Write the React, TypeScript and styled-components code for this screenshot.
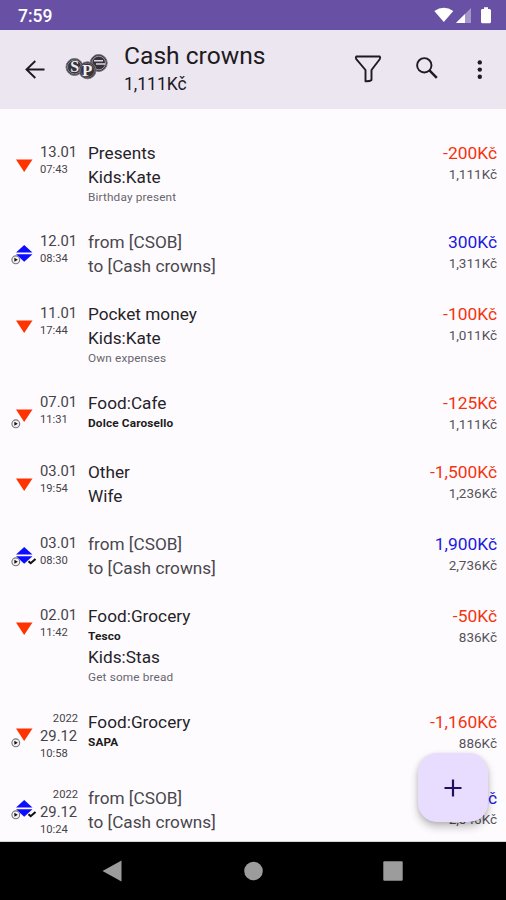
import React from 'react';
import styled, { createGlobalStyle } from 'styled-components';

const GlobalStyle = createGlobalStyle`
  * { box-sizing: border-box; }
  body { margin: 0; background: #fefbff; font-family: Roboto, "Noto Sans", sans-serif; }
`;

const Screen = styled.div`
  position: relative;
  width: 506px;
  height: 900px;
  display: flex;
  flex-direction: column;
  overflow: hidden;
  background: #fefbff;
`;

const StatusBar = styled.div`
  flex: none;
  height: 30px;
  padding: 2px 14px 0 18px;
  display: flex;
  align-items: center;
  justify-content: space-between;
  background: #6850a5;
  color: #fff;
  font-size: 17.5px;
  font-weight: 500;
`;

const StatusIconSlot = styled.div`
  display: flex;
  padding-bottom: 2px;
`;

const AppBar = styled.header`
  flex: none;
  height: 79px;
  padding: 0 15px 0 23px;
  display: flex;
  align-items: center;
  background: #ece6f1;
  color: #1d1b20;
`;

const BackSlot = styled.div`
  width: 42px;
  display: flex;
`;

const LogoSlot = styled.div`
  width: 59px;
  padding-bottom: 5px;
  display: flex;
`;

const Heading = styled.div`
  flex: 1;
  height: 79px;
  padding-top: 11px;
`;

const Title = styled.h1`
  margin: 0;
  font-size: 24.6px;
  line-height: 29px;
  font-weight: 400;
`;

const Subtitle = styled.div`
  font-size: 17.5px;
  line-height: 28px;
`;

const Actions = styled.div`
  display: flex;
  align-items: center;
`;

const FilterSlot = styled.div`
  width: 61px;
  padding-bottom: 2px;
  display: flex;
`;

const SearchSlot = styled.div`
  width: 54px;
  padding-bottom: 3px;
  display: flex;
`;

const List = styled.main`
  flex: none;
  height: 733px;
  padding-top: 20px;
  overflow: hidden;
  border-bottom: 1px solid #d5d3d6;
`;

const Row = styled.div<{ $height: number }>`
  height: ${p => p.$height}px;
  padding: 12px 9px 0 11px;
  display: grid;
  grid-template-columns: 29px 48px 1fr auto;
`;

const Marker = styled.div<{ $drop: number }>`
  padding-top: ${p => p.$drop}px;
  display: flex;
  align-items: flex-start;
`;

const When = styled.div<{ $lift: number }>`
  width: 38px;
  margin-top: ${p => p.$lift}px;
  display: flex;
  flex-direction: column;
  color: #454348;
`;

const Year = styled.span`
  height: 18px;
  font-size: 11.2px;
  line-height: 20px;
  text-align: right;
`;

const Day = styled.span`
  height: 18px;
  font-size: 14.8px;
  line-height: 18px;
`;

const Time = styled.span`
  height: 17px;
  font-size: 11.2px;
  line-height: 17px;
`;

type LineKind = 'main' | 'muted' | 'note' | 'payee';

const lineColor = { main: '#252328', muted: '#49474c', note: '#68666c', payee: '#1d1b20' };

const isSmall = (kind: LineKind) => kind === 'note' || kind === 'payee';

const Line = styled.div<{ $kind: LineKind }>`
  height: ${p => (isSmall(p.$kind) ? 17 : 24)}px;
  line-height: ${p => (isSmall(p.$kind) ? 17 : 24)}px;
  font-size: ${p => (isSmall(p.$kind) ? 11.8 : 17.2)}px;
  letter-spacing: ${p => (isSmall(p.$kind) ? 0.15 : 0.02)}px;
  font-weight: ${p => (p.$kind === 'payee' ? 700 : 400)};
  color: ${p => lineColor[p.$kind]};
  white-space: nowrap;
`;

const Sums = styled.div`
  text-align: right;
`;

const Amount = styled.div<{ $income: boolean }>`
  font-size: 17.4px;
  line-height: 24px;
  color: ${p => (p.$income ? '#1a1ae0' : '#f5330f')};
`;

const Balance = styled.div`
  font-size: 13.5px;
  line-height: 19px;
  color: #55535a;
`;

const Fab = styled.button`
  position: absolute;
  left: 418px;
  top: 753px;
  width: 70px;
  height: 69px;
  padding: 0;
  display: flex;
  align-items: center;
  justify-content: center;
  border: 0;
  border-radius: 19px;
  background: #e9ddff;
  box-shadow: 0 5px 8px rgba(0, 0, 0, 0.24), 0 1px 4px rgba(0, 0, 0, 0.1);
`;

const NavBar = styled.nav`
  flex: 1;
  padding: 0 103px 0 102px;
  display: flex;
  align-items: center;
  justify-content: space-between;
  background: #000;
`;

interface Entry {
  kind: 'expense' | 'transfer';
  pinned?: boolean;
  checked?: boolean;
  year?: string;
  day: string;
  time: string;
  lines: [LineKind, string][];
  amount: string;
  balance: string;
  height: number;
}

const transferLines: [LineKind, string][] = [['muted', 'from [CSOB]'], ['muted', 'to [Cash crowns]']];

const entries: Entry[] = [
  { kind: 'expense', day: '13.01', time: '07:43', lines: [['main', 'Presents'], ['main', 'Kids:Kate'], ['note', 'Birthday present']], amount: '-200Kč', balance: '1,111Kč', height: 89 },
  { kind: 'transfer', pinned: true, day: '12.01', time: '08:34', lines: transferLines, amount: '300Kč', balance: '1,311Kč', height: 72 },
  { kind: 'expense', day: '11.01', time: '17:44', lines: [['main', 'Pocket money'], ['main', 'Kids:Kate'], ['note', 'Own expenses']], amount: '-100Kč', balance: '1,011Kč', height: 89 },
  { kind: 'expense', pinned: true, day: '07.01', time: '11:31', lines: [['main', 'Food:Cafe'], ['payee', 'Dolce Carosello']], amount: '-125Kč', balance: '1,111Kč', height: 69 },
  { kind: 'expense', day: '03.01', time: '19:54', lines: [['main', 'Other'], ['main', 'Wife']], amount: '-1,500Kč', balance: '1,236Kč', height: 72 },
  { kind: 'transfer', pinned: true, checked: true, day: '03.01', time: '08:30', lines: transferLines, amount: '1,900Kč', balance: '2,736Kč', height: 72 },
  { kind: 'expense', day: '02.01', time: '11:42', lines: [['main', 'Food:Grocery'], ['payee', 'Tesco'], ['main', 'Kids:Stas'], ['note', 'Get some bread']], amount: '-50Kč', balance: '836Kč', height: 106 },
  { kind: 'expense', pinned: true, year: '2022', day: '29.12', time: '10:58', lines: [['main', 'Food:Grocery'], ['payee', 'SAPA']], amount: '-1,160Kč', balance: '886Kč', height: 76 },
  { kind: 'transfer', pinned: true, checked: true, year: '2022', day: '29.12', time: '10:24', lines: transferLines, amount: '1,900Kč', balance: '2,046Kč', height: 75 },
];

function EntryMarker({ kind, pinned, checked }: Pick<Entry, 'kind' | 'pinned' | 'checked'>) {
  return (
    <svg width="26" height="22" viewBox="0 0 26 22">
      {kind === 'expense' ? (
        <path d="M5 0.6H21.5L13.2 13Z" fill="#ff3300" />
      ) : (
        <path d="M13.2 0L21.5 7.4H5ZM5 9.2H21.5L13.2 16.7Z" fill="#0d0dff" />
      )}
      {pinned && (
        <g>
          <circle cx="4.8" cy="14.8" r="3.9" fill="#f4f2f4" stroke="#77757a" strokeWidth="1.1" />
          <path d="M3.4 12.8L6.8 14.8L3.4 16.8Z" fill="#111" />
        </g>
      )}
      {checked && <path d="M17.5 14.2L19.7 16.2L24.5 12" fill="none" stroke="#111" strokeWidth="2.1" />}
    </svg>
  );
}

function StatusIcons() {
  return (
    <StatusIconSlot>
      <svg width="58" height="18" viewBox="0 0 58 18" fill="#fff">
        <path d="M0.3 5Q9.8-1.5 19.3 5L9.8 16Z" />
        <path d="M37 2V17H22Z" opacity=".4" />
        <path d="M31 8V17H22Z" />
        <path d="M48 3H50V1.2H54V3H55.5Q57 3 57 4.5V15.8Q57 17.3 55.5 17.3H48.5Q47 17.3 47 15.8V4.5Q47 3 48 3Z" />
      </svg>
    </StatusIconSlot>
  );
}

function CoinsLogo() {
  return (
    <svg width="44" height="28" viewBox="0 0 44 28" fontFamily="Liberation Serif, serif" fontWeight="700" textAnchor="middle">
      <circle cx="33.7" cy="10" r="8.5" fill="#36333a" stroke="#77737c" />
      <circle cx="33.7" cy="10" r="6.8" fill="none" stroke="#c9c5ce" strokeWidth=".7" />
      <path d="M29 7.8H38M31 11H40" stroke="#ddd9e1" strokeWidth="1.5" />
      <circle cx="9.5" cy="14" r="8.5" fill="#36333a" stroke="#77737c" />
      <circle cx="9.5" cy="14" r="7" fill="none" stroke="#aaa6af" strokeWidth=".7" />
      <text x="9.8" y="19.2" fontSize="16" fill="#eeeaf2">S</text>
      <circle cx="22.5" cy="17.3" r="8.5" fill="#36333a" stroke="#77737c" />
      <circle cx="22.5" cy="17.3" r="7" fill="none" stroke="#8d8992" strokeWidth=".6" />
      <text x="22.3" y="22.5" fontSize="17" fill="#f2eef6">P</text>
    </svg>
  );
}

export default function App() {
  return (
    <Screen>
      <GlobalStyle />
      <StatusBar>
        <span>7:59</span>
        <StatusIcons />
      </StatusBar>
      <AppBar>
        <BackSlot>
          <svg width="24" height="22" viewBox="0 0 24 22" fill="none" stroke="#1d1b20" strokeWidth="1.9">
            <path d="M21.5 10.5H4M12.3 2L3.5 10.5L12.3 19" />
          </svg>
        </BackSlot>
        <LogoSlot><CoinsLogo /></LogoSlot>
        <Heading>
          <Title>Cash crowns</Title>
          <Subtitle>1,111Kč</Subtitle>
        </Heading>
        <Actions>
          <FilterSlot>
            <svg width="28" height="28" viewBox="0 0 28 28" fill="none" stroke="#1d1b20" strokeWidth="1.9" strokeLinejoin="round">
              <path d="M2.3 1.5H25.7Q26.7 2.5 25.7 4.2L17.5 15V25Q16 26.5 11.5 26.3V15L2.3 4.2Q1.3 2.5 2.3 1.5Z" />
            </svg>
          </FilterSlot>
          <SearchSlot>
            <svg width="24" height="24" viewBox="0 0 24 24" fill="none" stroke="#1d1b20" strokeWidth="1.9">
              <circle cx="9.3" cy="9.3" r="7.2" />
              <path d="M14.2 14.2L21.8 21.8" strokeWidth="2.5" />
            </svg>
          </SearchSlot>
          <svg width="22" height="22" viewBox="0 0 22 22" fill="#1d1b20">
            <circle cx="10.8" cy="3.4" r="2.2" />
            <circle cx="10.8" cy="10.6" r="2.2" />
            <circle cx="10.8" cy="17.8" r="2.2" />
          </svg>
        </Actions>
      </AppBar>
      <List>
        {entries.map((e, i) => (
          <Row key={i} $height={e.height}>
            <Marker $drop={e.kind === 'expense' ? 18 : e.year ? 14 : 15}>
              <EntryMarker kind={e.kind} pinned={e.pinned} checked={e.checked} />
            </Marker>
            <When $lift={e.year ? -1 : 2}>
              {e.year && <Year>{e.year}</Year>}
              <Day>{e.day}</Day>
              <Time>{e.time}</Time>
            </When>
            <div>
              {e.lines.map(([kind, text]) => <Line key={text} $kind={kind}>{text}</Line>)}
            </div>
            <Sums>
              <Amount $income={e.kind === 'transfer'}>{e.amount}</Amount>
              <Balance>{e.balance}</Balance>
            </Sums>
          </Row>
        ))}
      </List>
      <Fab aria-label="Add">
        <svg width="18" height="18" viewBox="0 0 18 18" stroke="#22105c" strokeWidth="2.2">
          <path d="M9 0.5V17.5M0.5 9H17.5" />
        </svg>
      </Fab>
      <NavBar>
        <svg width="20" height="22" viewBox="0 0 20 22"><path d="M0.5 11L19.5 0.5V21.5Z" fill="#9c9c9c" /></svg>
        <svg width="20" height="20" viewBox="0 0 20 20"><circle cx="10.5" cy="10" r="9.3" fill="#9c9c9c" /></svg>
        <svg width="20" height="20" viewBox="0 0 20 20"><rect x=".3" y=".3" width="19.4" height="19.4" rx="1" fill="#9c9c9c" /></svg>
      </NavBar>
    </Screen>
  );
}
